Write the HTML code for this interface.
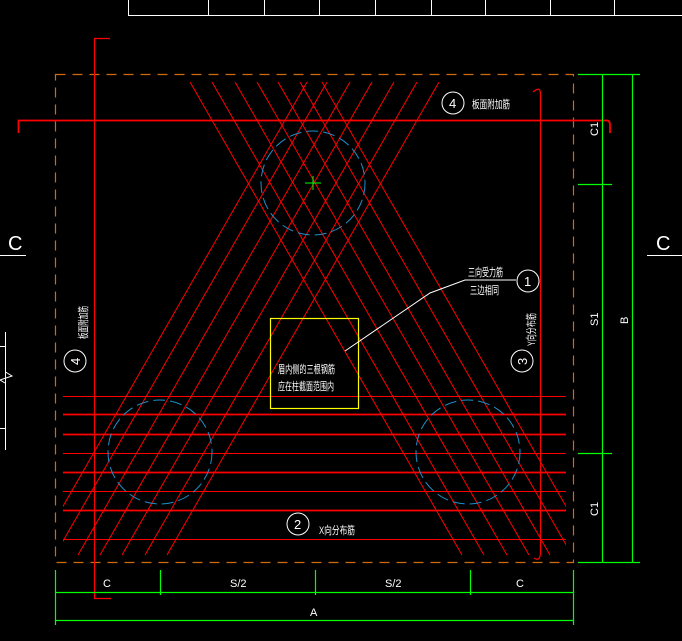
<!DOCTYPE html>
<html><head><meta charset="utf-8"><style>
html,body{margin:0;padding:0;background:#000;width:682px;height:641px;overflow:hidden}
svg{display:block}
text{font-family:"Liberation Sans","Noto Sans CJK SC",sans-serif;fill:#fff}
</style></head><body>
<svg width="682" height="641" viewBox="0 0 682 641" xmlns="http://www.w3.org/2000/svg">
<defs><clipPath id="c"><rect x="63" y="82" width="503" height="474"/></clipPath></defs>
<g stroke="#fff" stroke-width="1" fill="none">
<path d="M128.5 0V15.5H682M208.5 0V15M264.5 0V15M319.5 0V15M375.5 0V15M431.5 0V15M485.5 0V15M550.5 0V15M614.5 0V15"/>
<path d="M0 255.5H26M647 255.5H682"/>
<path d="M5.5 332V450M0 346.5H6M0 428.5H6M5.5 372L12 376L0 380L5 383"/>
</g>
<text x="8" y="250" font-size="20">C</text>
<text x="656" y="250" font-size="20">C</text>
<rect x="55.5" y="74.5" width="518" height="488" fill="none" stroke="#d06a10" stroke-width="1.2" stroke-dasharray="10,7"/>
<g clip-path="url(#c)" stroke="#f00" stroke-width="1">
<path d="M190 82L462 555M212 82L484 555M235 82L507 555M257 82L529 555M278 82L550 555M300 82L572 555M322 82L594 555"/>
<path d="M439 82L167 555M417 82L145 555M394 82L122 555M372 82L100 555M350 82L78 555M327 82L55 555M307 82L35 555"/>
</g>
<g stroke="#f00">
<path d="M63 396.5H566M63 453.5H566M63 491.5H566M63 539.5H566" stroke-width="1"/>
<path d="M63 414.5H566M63 434.5H566M63 472.5H566M63 510.5H566" stroke-width="1.8"/>
<path d="M18.5 133V120.5H606Q610 120 610 125V133" stroke-width="1.8" fill="none"/>
<path d="M110 38.5H94.5V598.5H111" stroke-width="1.2" fill="none"/>
<path d="M533 92Q540 86 540.5 93V553Q540 562 534 558" stroke-width="1.2" fill="none"/>
</g>
<g stroke="#1e90c8" stroke-width="1" fill="none" stroke-dasharray="12,5">
<circle cx="313" cy="183" r="52"/><circle cx="160" cy="452" r="52"/><circle cx="468" cy="452" r="52"/>
</g>
<path d="M305 183H321M313 176V190" stroke="#0f0"/>
<rect x="270.5" y="318.5" width="88" height="90" fill="none" stroke="#ff0" stroke-width="1.2"/>
<text x="278" y="373" font-size="11" textLength="57" lengthAdjust="spacingAndGlyphs">眉内侧的三根钢筋</text>
<text x="278" y="390" font-size="11" textLength="56" lengthAdjust="spacingAndGlyphs">应在柱截面范围内</text>
<path d="M345 351L430 293L465 280H516" stroke="#fff" fill="none"/>
<text x="468" y="276" font-size="11" textLength="35" lengthAdjust="spacingAndGlyphs">三向受力筋</text>
<text x="470" y="294" font-size="11" textLength="29" lengthAdjust="spacingAndGlyphs">三边相同</text>
<g stroke="#fff" fill="none"><circle cx="528" cy="281" r="11"/><circle cx="453" cy="103" r="11"/><circle cx="298" cy="524" r="11"/><circle cx="522" cy="361" r="11"/><circle cx="75" cy="361" r="11"/></g>
<text x="524" y="286" font-size="13">1</text>
<text x="449" y="108" font-size="13">4</text>
<text x="294" y="529" font-size="13">2</text>
<text x="518" y="366" font-size="13" transform="rotate(-90 522 361)">3</text>
<text x="71" y="366" font-size="13" transform="rotate(-90 75 361)">4</text>
<text x="472" y="108" font-size="11" textLength="38" lengthAdjust="spacingAndGlyphs">板面附加筋</text>
<text x="319" y="534" font-size="11" textLength="36" lengthAdjust="spacingAndGlyphs">X向分布筋</text>
<text x="0" y="0" font-size="11" textLength="33" lengthAdjust="spacingAndGlyphs" transform="translate(535 346) rotate(-90)">Y向分布筋</text>
<text x="0" y="0" font-size="11" textLength="33" lengthAdjust="spacingAndGlyphs" transform="translate(87 339) rotate(-90)">板面附加筋</text>
<g stroke="#0f0" stroke-width="1.2" fill="none">
<path d="M578 74.5H640M578 184.5H612M578 453.5H612M578 562.5H640M602.5 74V562M632.5 74V562"/>
<path d="M55.5 570V625M160.5 570V595M315.5 570V595M470.5 570V595M573.5 570V625M55 592.5H573M55 620.5H573"/>
</g>
<g fill="#fff" font-size="11">
<text x="0" y="0" transform="translate(598 136) rotate(-90)">C1</text>
<text x="0" y="0" transform="translate(598 326) rotate(-90)">S1</text>
<text x="0" y="0" transform="translate(598 516) rotate(-90)">C1</text>
<text x="0" y="0" transform="translate(628 324) rotate(-90)">B</text>
<text x="103" y="587">C</text><text x="230" y="587">S/2</text><text x="385" y="587">S/2</text><text x="516" y="587">C</text>
<text x="310" y="616">A</text>
</g>
</svg>
</body></html>
